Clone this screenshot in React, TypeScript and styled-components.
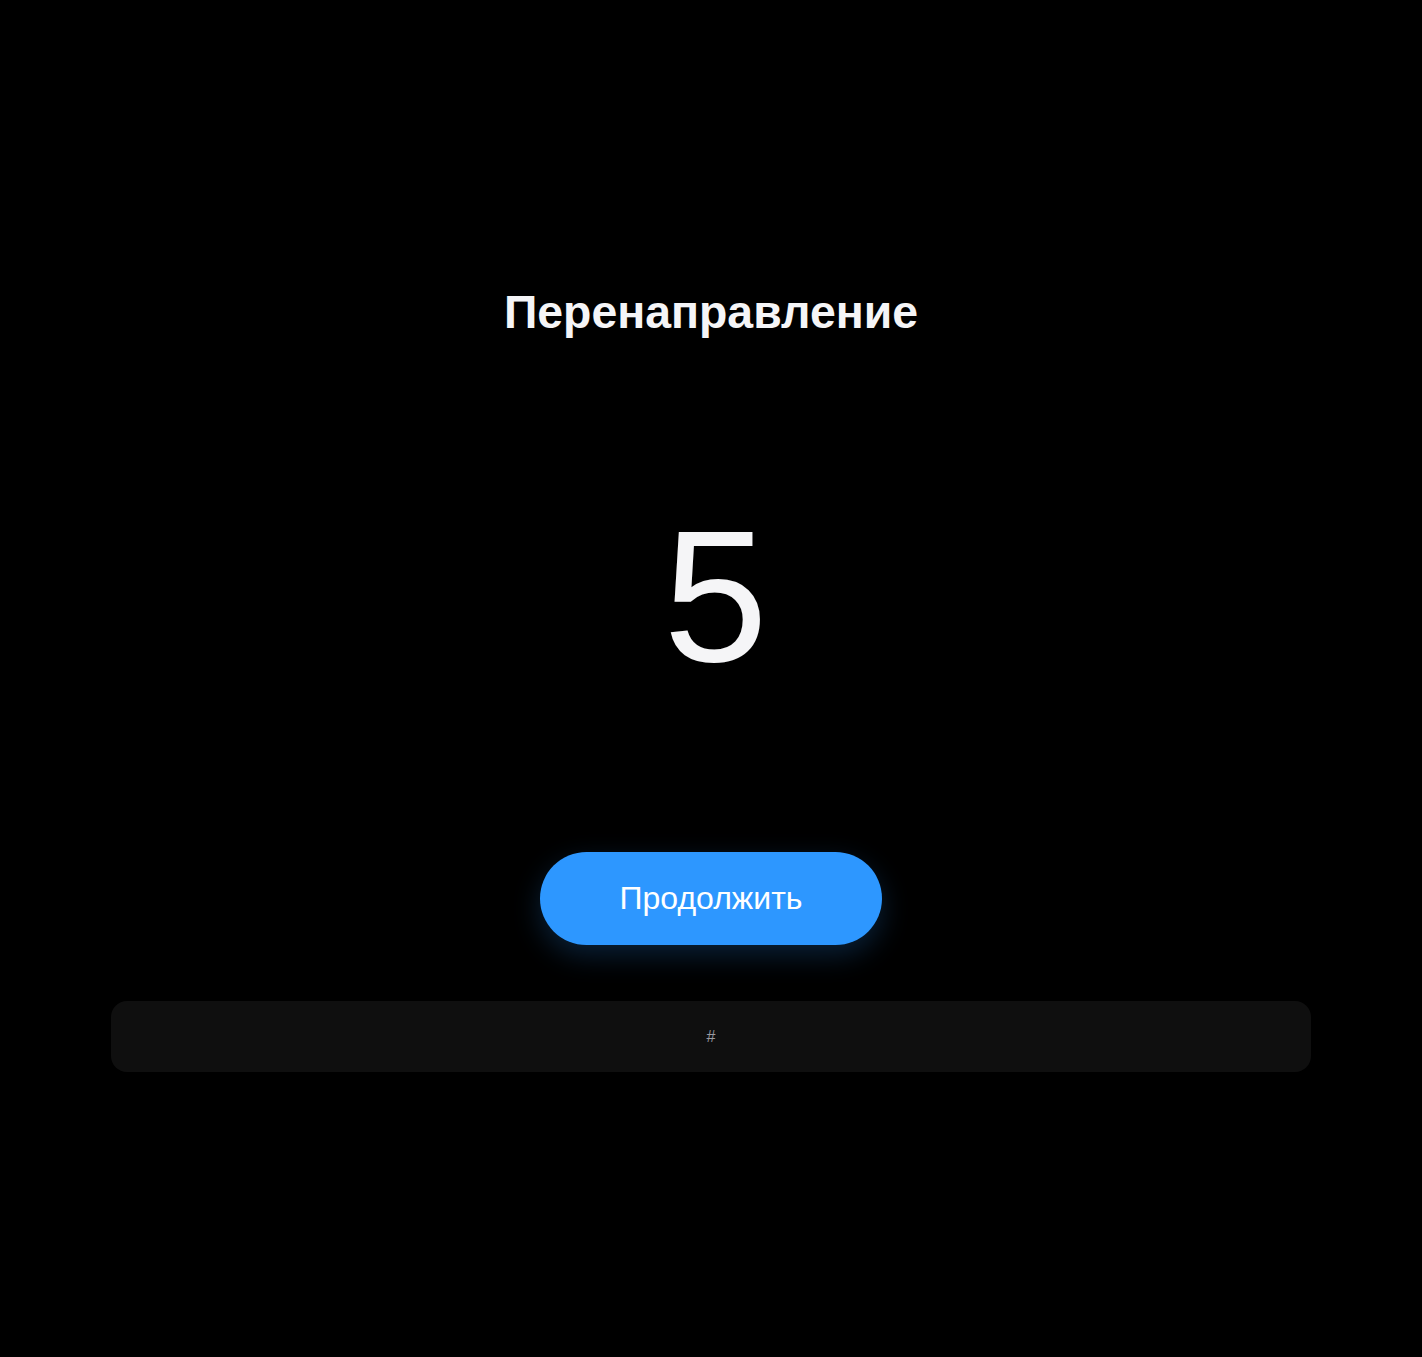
import React from 'react'
import styled, { createGlobalStyle } from 'styled-components'

const GlobalStyle = createGlobalStyle`
  html, body {
    margin: 0;
    padding: 0;
    background: #000;
  }
  body {
    font-family: 'Liberation Sans', Arial, sans-serif;
    color: #f5f5f7;
  }
`

const Page = styled.main`
  min-height: 1357px;
  display: flex;
  flex-direction: column;
  align-items: center;
  padding-top: 284px;
  box-sizing: border-box;
`

const Title = styled.h1`
  margin: 0;
  font-size: 46.4px;
  line-height: 56px;
  font-weight: 700;
  color: #f5f5f7;
  text-align: center;
`

const Countdown = styled.div`
  margin-top: 156px;
  padding-left: 9px;
  font-size: 188px;
  line-height: 200px;
  font-weight: 400;
  color: #f5f5f7;
  text-align: center;
`

const ContinueButton = styled.button`
  margin-top: 156px;
  width: 342px;
  height: 93px;
  border: none;
  border-radius: 999px;
  background: #2d97ff;
  color: #fff;
  font-family: 'Liberation Sans', Arial, sans-serif;
  font-size: 32px;
  cursor: pointer;
  box-shadow: 0 10px 28px rgba(45, 151, 255, 0.22);
`

const LinkBar = styled.div`
  margin-top: 56px;
  width: 1200px;
  height: 71px;
  border-radius: 16px;
  background: #0f0f0f;
  display: flex;
  align-items: center;
  justify-content: center;
  color: #9a9aa0;
  font-size: 16px;
`

export default function App () {
  return (
    <>
      <GlobalStyle />
      <Page>
        <Title>Перенаправление</Title>
        <Countdown>5</Countdown>
        <ContinueButton>Продолжить</ContinueButton>
        <LinkBar>#</LinkBar>
      </Page>
    </>
  )
}
